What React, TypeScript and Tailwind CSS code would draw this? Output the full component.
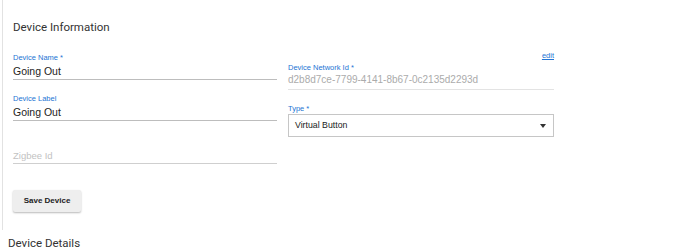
const arial = { fontFamily: "'Liberation Sans', Arial, sans-serif" };

export default function App() {
  return (
    <div className="w-[690px] h-[249px] bg-white overflow-hidden" style={{ fontFamily: "Roboto, 'Liberation Sans', sans-serif" }}>
      <div className="ml-[2px] h-[230px] border-l border-[#e2e2e2] pl-[10px]">
        <div className="pt-[20px] text-[11.5px] leading-[14px] text-[#333]">Device Information</div>
        <div className="grid grid-cols-[264px_266px] gap-x-[11px]" style={arial}>
          <div className="flex flex-col">
            <div className="mt-[19px] text-[7.5px] leading-[10px] text-[#2475d4]">Device Name *</div>
            <div className="mt-[2px] text-[10.5px] leading-[12px] text-[#222] pb-[2px] border-b border-[#bdbdbd]">Going Out</div>
            <div className="mt-[14px] text-[7.5px] leading-[10px] text-[#2475d4]">Device Label</div>
            <div className="mt-[2px] text-[10.5px] leading-[12px] text-[#222] pb-[2px] border-b border-[#bdbdbd]">Going Out</div>
            <div className="mt-[29px] text-[9.5px] leading-[12px] text-[#c2c2c2] pb-[1px] border-b border-[#cfcfcf]">Zigbee Id</div>
            <div className="mt-[22px]">
              <button className="h-[22px] w-[68px] bg-[#eeeeee] rounded-[2px] text-[8px] font-bold text-[#222] shadow-[0_1px_2px_rgba(0,0,0,0.28)]">Save Device</button>
            </div>
          </div>
          <div className="flex flex-col">
            <div className="mt-[17px] flex justify-end">
              <span className="text-[7.5px] leading-[10px] text-[#2475d4] underline">edit</span>
            </div>
            <div className="mt-[2px] text-[7.5px] leading-[10px] text-[#2475d4]">Device Network Id *</div>
            <div className="mt-[1px] text-[10px] leading-[12px] text-[#ababab] pb-[3px] border-b border-[#e3e3e3]">d2b8d7ce-7799-4141-8b67-0c2135d2293d</div>
            <div className="mt-[14px] text-[7.5px] leading-[10px] text-[#2475d4]">Type *</div>
            <div className="h-[23px] border border-[#c6c6c6] flex items-center justify-between pl-[6px] pr-[7px]">
              <span className="text-[8.75px] leading-[21px] text-[#222]">Virtual Button</span>
              <svg width="6" height="4" viewBox="0 0 6 4"><path d="M0 0 L6 0 L3 4 Z" fill="#333" /></svg>
            </div>
          </div>
        </div>
      </div>
      <div className="mt-[6px] pl-[8px] text-[11.5px] leading-[14px] text-[#333]">Device Details</div>
    </div>
  );
}
